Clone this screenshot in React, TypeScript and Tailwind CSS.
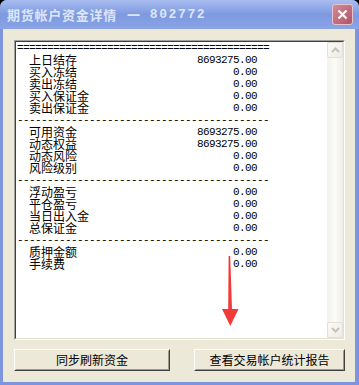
const cjk = '"Noto Sans CJK SC", "Noto Sans", sans-serif';
const mono = '"Liberation Mono", "DejaVu Sans Mono", monospace';

type Row = { label?: string; value?: string; rule?: string };

const rows: Row[] = [
  { rule: '='.repeat(42) },
  { label: '上日结存', value: '8693275.00' },
  { label: '买入冻结', value: '0.00' },
  { label: '卖出冻结', value: '0.00' },
  { label: '买入保证金', value: '0.00' },
  { label: '卖出保证金', value: '0.00' },
  { rule: '-'.repeat(42) },
  { label: '可用资金', value: '8693275.00' },
  { label: '动态权益', value: '8693275.00' },
  { label: '动态风险', value: '0.00' },
  { label: '风险级别', value: '0.00' },
  { rule: '-'.repeat(42) },
  { label: '浮动盈亏', value: '0.00' },
  { label: '平仓盈亏', value: '0.00' },
  { label: '当日出入金', value: '0.00' },
  { label: '总保证金', value: '0.00' },
  { rule: '-'.repeat(42) },
  { label: '质押金额', value: '0.00' },
  { label: '手续费', value: '0.00' },
];

function ScrollButton({ up }: { up?: boolean }) {
  return (
    <div className="w-[16px] h-[16px] flex items-center justify-center rounded-[2px] border border-[#E3E1D6] bg-gradient-to-br from-[#FBFBF8] to-[#EDEBE3]">
      <svg width="9" height="6" viewBox="0 0 9 6">
        <path
          d={up ? 'M1 5 L4.5 1.5 L8 5' : 'M1 1 L4.5 4.5 L8 1'}
          fill="none"
          stroke="#C5C2B6"
          strokeWidth="2"
        />
      </svg>
    </div>
  );
}

function Button({ label, width }: { label: string; width: string }) {
  return (
    <div
      className={`${width} h-[22px] border border-t-white border-l-white border-b-[#404040] border-r-[#404040] bg-[#ECE9D8]`}
    >
      <div
        className="h-full flex items-center justify-center border border-t-[#ECE9D8] border-l-[#ECE9D8] border-b-[#9D9A8A] border-r-[#9D9A8A] text-[12px] text-black"
        style={{ fontFamily: cjk }}
      >
        {label}
      </div>
    </div>
  );
}

export default function App() {
  return (
    <div className="w-[359px] h-[385px] bg-black overflow-hidden">
      <div className="w-full h-full flex flex-col bg-[#7D94DE] rounded-t-[7px] overflow-hidden">
        {/* Title bar */}
        <div className="h-[29px] flex items-center justify-between pl-[7px] pr-[6px] bg-gradient-to-b from-[#A9BDF0] via-[#7E99E0] to-[#8AA4E6]">
          <div
            className="flex items-center text-[13px] font-bold text-[#DDE6F8] tracking-[0.75px]"
            style={{ fontFamily: cjk }}
          >
            <span>期货帐户资金详情</span>
            <span className="ml-[10px]">一</span>
            <span className="ml-[9px] tracking-[1.6px]" style={{ fontFamily: mono }}>
              802772
            </span>
          </div>
          <div className="w-[21px] h-[21px] rounded-[3px] border border-[#E6C3CB] bg-gradient-to-br from-[#D08B98] to-[#B05468] flex items-center justify-center">
            <svg width="11" height="11" viewBox="0 0 11 11">
              <path d="M1.5 1.5 L9.5 9.5 M9.5 1.5 L1.5 9.5" stroke="#FFFFFF" strokeWidth="2.2" />
            </svg>
          </div>
        </div>

        {/* Client area */}
        <div className="flex-1 ml-[3px] mr-[4px] mb-[3px] bg-[#ECE9D8] pt-[11px] pl-[11px]">
          <div className="relative w-[331px] h-[300px] border border-t-[#A0A0A0] border-l-[#A0A0A0] border-b-white border-r-white">
            <div className="w-full h-full flex border border-t-[#404040] border-l-[#404040] border-b-[#E3E0D0] border-r-[#E3E0D0] bg-white">
              <div className="flex-1 pl-[1px]">
                {rows.map((r, i) =>
                  r.rule ? (
                    <div
                      key={i}
                      className="h-[12px] leading-[12px] text-[11px] tracking-[-0.6px] text-black whitespace-pre"
                      style={{ fontFamily: mono }}
                    >
                      {r.rule}
                    </div>
                  ) : (
                    <div key={i} className="h-[12px] w-[240px] flex items-center justify-between text-black">
                      <span className="pl-[12px] text-[12px] leading-[12px]" style={{ fontFamily: cjk }}>
                        {r.label}
                      </span>
                      <span
                        className="text-[11px] leading-[12px] tracking-[-0.6px]"
                        style={{ fontFamily: mono }}
                      >
                        {r.value}
                      </span>
                    </div>
                  )
                )}
              </div>
              {/* Scrollbar */}
              <div className="w-[16px] h-full flex flex-col justify-between bg-gradient-to-r from-[#F2F1EB] via-[#FBFBF8] to-[#F0EEE6]">
                <ScrollButton up />
                <ScrollButton />
              </div>
            </div>

            {/* Red annotation arrow */}
            <svg
              className="absolute left-0 top-0 pointer-events-none"
              width="331"
              height="300"
              viewBox="14 40 331 300"
            >
              <polygon
                points="227.6,255 229.2,255 231,308 237.5,308 229.3,325 221,308 227.2,308"
                fill="#F23A3A"
              />
            </svg>
          </div>

          <div className="flex mt-[9px]">
            <Button label="同步刷新资金" width="w-[156px]" />
            <div className="ml-[24px]">
              <Button label="查看交易帐户统计报告" width="w-[151px]" />
            </div>
          </div>
        </div>
      </div>
    </div>
  );
}
